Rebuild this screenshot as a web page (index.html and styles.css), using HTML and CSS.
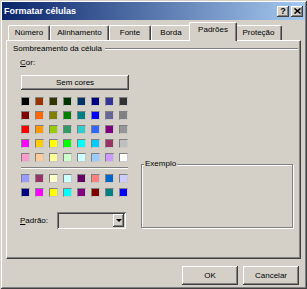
FILE: index.html
```html
<!DOCTYPE html>
<html lang="pt">
<head>
    <meta charset="UTF-8">
    <meta name="viewport" content="width=device-width, initial-scale=1">
    <title>Formatar células</title>
    <link rel="stylesheet" href="styles.css">
</head>
<body>
<div class="janela">
    <div class="barraTitulo">
        <span>Formatar células</span>
        <span class="botoesTitulo">
            <span class="botaoTitulo">?</span>
            <span class="botaoTitulo">
                <svg width="7" height="6" viewBox="0 0 7 6"><path d="M0.5 0.5 L6.5 5.5 M6.5 0.5 L0.5 5.5" stroke="#000" stroke-width="1.6"/></svg>
            </span>
        </span>
    </div>

    <div class="abas">
        <div class="aba numero">Número</div>
        <div class="aba alinhamento">Alinhamento</div>
        <div class="aba fonte">Fonte</div>
        <div class="aba borda">Borda</div>
        <div class="aba padroes ativa">Padrões</div>
        <div class="aba protecao">Proteção</div>
    </div>

    <div class="painel">
        <div class="grupo">
            <span>Sombreamento da célula</span>
            <span class="linha"></span>
        </div>
        <div class="conteudo">
            <div class="colunaCores">
                <div class="rotulo"><u>C</u>or:</div>
                <button class="botao semCores">Sem cores</button>
                <div class="paleta" id="paletaPadrao"></div>
                <div class="separador"></div>
                <div class="paleta" id="paletaGrafico"></div>
                <div class="linhaPadrao">
                    <span class="rotulo rotuloPadrao"><u>P</u>adrão:</span>
                    <div class="caixaPadrao">
                        <span class="seta"><span class="triangulo"></span></span>
                    </div>
                </div>
            </div>
            <fieldset class="exemplo">
                <legend>Exemplo</legend>
            </fieldset>
        </div>
    </div>

    <div class="botoes">
        <button class="botao">OK</button>
        <button class="botao">Cancelar</button>
    </div>
</div>

<script>
    var coresPadrao = [
        "#000000", "#993300", "#333300", "#003300", "#003366", "#000080", "#333399", "#333333",
        "#800000", "#ff6600", "#808000", "#008000", "#008080", "#0000ff", "#666699", "#808080",
        "#ff0000", "#ff9900", "#99cc00", "#339966", "#33cccc", "#3366ff", "#800080", "#969696",
        "#ff00ff", "#ffcc00", "#ffff00", "#00ff00", "#00ffff", "#00ccff", "#993366", "#c0c0c0",
        "#ff99cc", "#ffcc99", "#ffff99", "#ccffcc", "#ccffff", "#99ccff", "#cc99ff", "#ffffff"
    ];
    var coresGrafico = [
        "#9999ff", "#993366", "#ffffcc", "#ccffff", "#660066", "#ff8080", "#0066cc", "#ccccff",
        "#000080", "#ff00ff", "#ffff00", "#00ffff", "#800080", "#800000", "#008080", "#0000ff"
    ];

    function lagPaleta(id, cores) {
        var paleta = document.getElementById(id);
        for (var i = 0; i < cores.length; i++) {
            var quadrado = document.createElement("div");
            quadrado.className = "cor";
            quadrado.style.backgroundColor = cores[i];
            paleta.appendChild(quadrado);
        }
    }

    lagPaleta("paletaPadrao", coresPadrao);
    lagPaleta("paletaGrafico", coresGrafico);
</script>
</body>
</html>
```

FILE: styles.css
```css
body {
    margin: 0;
    background-color: #d4d0c8;
    font-family: "Liberation Sans", Arial, sans-serif;
    font-size: 8px;
    color: #000;
}

.janela {
    width: 307px;
    height: 289px;
    box-sizing: border-box;
    padding: 2px;
    background-color: #d4d0c8;
    box-shadow: inset 1px 1px #d4d0c8, inset -1px -1px #404040,
                inset 2px 2px #fff, inset -2px -2px #808080;
}

.barraTitulo {
    height: 18px;
    display: flex;
    align-items: center;
    justify-content: space-between;
    padding: 0 2px 0 2px;
    background: linear-gradient(to right, #0a246a, #a6caf0);
    color: #fff;
    font-weight: bold;
    font-size: 9px;
}

.botoesTitulo {
    display: flex;
    gap: 2px;
}

.botaoTitulo {
    width: 12px;
    height: 11px;
    display: flex;
    align-items: center;
    justify-content: center;
    background-color: #d4d0c8;
    color: #000;
    font-size: 9px;
    line-height: 11px;
    box-shadow: inset -1px -1px #404040, inset 1px 1px #fff, inset -2px -2px #808080;
}

/* faner */
.abas {
    height: 20px;
    display: flex;
    align-items: flex-end;
    padding-left: 6px;
}

.aba {
    height: 15px;
    box-sizing: border-box;
    line-height: 14px;
    text-align: center;
    border-top: 1px solid #fff;
    border-left: 1px solid #fff;
    border-right: 1px solid #404040;
    border-radius: 2px 2px 0 0;
    box-shadow: inset -1px 0 #808080;
    background-color: #d4d0c8;
}

.numero { width: 42px; }
.alinhamento { width: 59px; }
.fonte { width: 42px; }
.borda { width: 40px; }
.padroes { width: 44px; }
.protecao { width: 47px; }

.aba.ativa {
    width: 48px;
    height: 19px;
    margin: 0 -2px -1px;
    padding-bottom: 3px;
    position: relative;
    z-index: 1;
}

.painel {
    width: 295px;
    height: 219px;
    box-sizing: border-box;
    margin-left: 4px;
    border: 1px solid;
    border-color: #fff #404040 #404040 #fff;
    box-shadow: inset -1px -1px #808080;
}

.grupo {
    height: 10px;
    line-height: 10px;
    display: flex;
    align-items: center;
    margin: 3px 2px 0 6px;
}

.linha {
    flex: 1;
    height: 0;
    margin-left: 3px;
    border-top: 1px solid #808080;
    border-bottom: 1px solid #fff;
}

.conteudo {
    display: flex;
    align-items: flex-start;
    margin: 4px 0 0 14px;
}

.colunaCores {
    width: 108px;
}

.rotulo {
    line-height: 10px;
    margin-left: -1px;
}

.botao {
    font-family: inherit;
    font-size: 8px;
    color: #000;
    padding: 0;
    border: 0;
    background-color: #d4d0c8;
    box-shadow: inset -1px -1px #404040, inset 1px 1px #fff,
                inset -2px -2px #808080, inset 2px 2px #d4d0c8;
}

.semCores {
    display: block;
    width: 108px;
    height: 15px;
    margin-top: 7px;
}

.paleta {
    display: grid;
    grid-template-columns: repeat(8, 9px);
    grid-auto-rows: 9px;
    gap: 5px;
    margin-top: 7px;
}

.cor {
    box-sizing: border-box;
    border: 1px solid;
    border-color: #808080 #c8c8c8 #c8c8c8 #808080;
}

.separador {
    width: 107px;
    margin-top: 5px;
    border-top: 1px solid #808080;
    border-bottom: 1px solid #fff;
}

.separador + .paleta {
    margin-top: 5px;
}

.linhaPadrao {
    display: flex;
    align-items: center;
    margin-top: 15px;
}

.rotuloPadrao {
    width: 37px;
}

.caixaPadrao {
    width: 69px;
    height: 17px;
    box-sizing: border-box;
    padding: 2px;
    display: flex;
    justify-content: flex-end;
    box-shadow: inset 1px 1px #808080, inset -1px -1px #fff,
                inset 2px 2px #404040, inset -2px -2px #d4d0c8;
}

.seta {
    width: 11px;
    height: 13px;
    display: flex;
    align-items: center;
    justify-content: center;
    box-shadow: inset -1px -1px #404040, inset 1px 1px #fff, inset -2px -2px #808080;
}

.triangulo {
    width: 0;
    height: 0;
    border-left: 3px solid transparent;
    border-right: 3px solid transparent;
    border-top: 3px solid #000;
}

.exemplo {
    width: 152px;
    height: 69px;
    box-sizing: border-box;
    margin: 101px 0 0 12px;
    padding: 0;
    border: 1px solid #808080;
    box-shadow: 1px 1px 0 #fff, inset 1px 1px 0 #fff;
}

.exemplo legend {
    margin-left: 2px;
    padding: 0 1px;
    line-height: 10px;
    background-color: #d4d0c8;
}

.botoes {
    display: flex;
    justify-content: flex-end;
    gap: 5px;
    margin-top: 7px;
    padding-right: 6px;
}

.botoes .botao {
    width: 56px;
    height: 19px;
}
```
